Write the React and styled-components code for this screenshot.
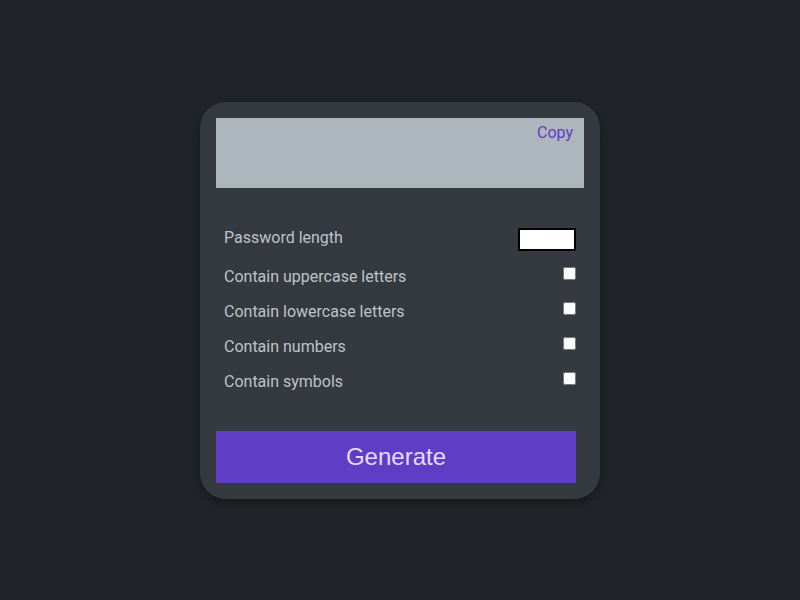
import React from "react";
import styled, { createGlobalStyle } from "styled-components";

const Global = createGlobalStyle`
  html, body { margin: 0; padding: 0; background: #212529; }
  body { font-family: Roboto, "Liberation Sans", sans-serif; }
  * { box-sizing: border-box; }
`;

const Page = styled.div`
  min-height: 100vh;
  display: flex;
  align-items: center;
  justify-content: center;
`;

const Card = styled.div`
  width: 400px;
  padding: 16px;
  background: #343a40;
  border-radius: 26px;
  box-shadow: 0 4px 12px rgba(0, 0, 0, 0.35);
  display: flex;
  flex-direction: column;
`;

const Output = styled.div`
  height: 70px;
  background: #adb5bd;
  display: flex;
  justify-content: flex-end;
  align-items: flex-start;
`;

const CopyButton = styled.button`
  background: none;
  border: none;
  padding: 5px 11px 0 0;
  font-family: Roboto, "Liberation Sans", sans-serif;
  font-size: 16px;
  line-height: 19px;
  color: #5f3dc4;
  cursor: pointer;
`;

const Settings = styled.div`
  margin: 31px 8px 32px 8px;
  display: flex;
  flex-direction: column;
`;

const Row = styled.label`
  display: flex;
  align-items: center;
  justify-content: space-between;
  height: ${(p) => (p.$tall ? 40 : 35)}px;
  padding-bottom: ${(p) => (p.$tall ? 2 : 0)}px;
  font-size: 16px;
  color: #bec3c9;
`;

const LengthInput = styled.input`
  width: 58px;
  height: 23px;
  margin: 4px 0 0 0;
  border: 2px solid #000;
  background: #fff;
  padding: 0;
`;

const Check = styled.input`
  width: 13px;
  height: 13px;
  margin: 0 0 5px 0;
`;

const Generate = styled.button`
  width: 360px;
  height: 52px;
  border: none;
  background: #5f3dc4;
  color: #e5dbff;
  font-family: "Liberation Sans", Arial, sans-serif;
  font-size: 24px;
  cursor: pointer;
`;

const options = [
  "Contain uppercase letters",
  "Contain lowercase letters",
  "Contain numbers",
  "Contain symbols",
];

export default function App() {
  return (
    <>
      <Global />
      <Page>
        <Card>
          <Output>
            <CopyButton>Copy</CopyButton>
          </Output>
          <Settings>
            <Row $tall>
              Password length
              <LengthInput type="number" />
            </Row>
            {options.map((o) => (
              <Row key={o}>
                {o}
                <Check type="checkbox" />
              </Row>
            ))}
          </Settings>
          <Generate>Generate</Generate>
        </Card>
      </Page>
    </>
  );
}
